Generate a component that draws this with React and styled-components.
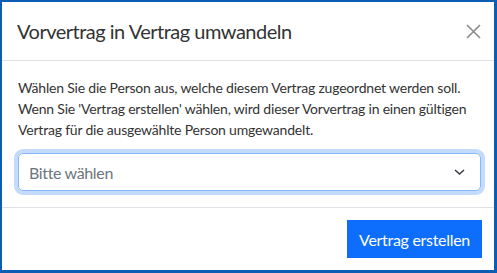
import React from "react"
import styled, { createGlobalStyle } from "styled-components"

const GlobalStyle = createGlobalStyle`
  html, body {
    margin: 0;
    padding: 0;
    background: #0b5db3;
  }
  body {
    font-family: Lato, "Liberation Sans", sans-serif;
    color: #333;
  }
`

const Frame = styled.div`
  box-sizing: border-box;
  height: 273px;
  padding: 2px 3px 3px 2px;
`

const Dialog = styled.div`
  height: 100%;
  background: #fff;
  display: flex;
  flex-direction: column;
`

const Header = styled.div`
  height: 58px;
  flex-shrink: 0;
  display: flex;
  align-items: center;
  justify-content: space-between;
  padding: 0 13px 0 15px;
  border-bottom: 1px solid #dee2e6;
`

const Title = styled.h5`
  margin: 0;
  font-size: 20px;
  font-weight: 400;
  letter-spacing: -0.5px;
  color: #333;
`

const CloseButton = styled.button`
  border: 0;
  background: none;
  padding: 0;
  width: 16px;
  height: 16px;
  display: flex;
  align-items: center;
  justify-content: center;
  cursor: pointer;
`

const Body = styled.div`
  flex: 1;
  padding: 16px 13px 15px 16px;
  display: flex;
  flex-direction: column;
`

const Text = styled.p`
  margin: 0 0 13px;
  font-size: 14px;
  line-height: 21px;
  letter-spacing: -0.2px;
  white-space: nowrap;
  color: #333;
`

const SelectBox = styled.div`
  box-sizing: border-box;
  height: 38px;
  border: 1px solid #86b7fe;
  border-radius: 5px;
  box-shadow: 0 0 0 4px #c3dbfe;
  display: flex;
  align-items: center;
  justify-content: space-between;
  padding: 0 15px 0 10px;
  font-size: 16px;
  letter-spacing: -0.35px;
  color: ${props => (props.$empty ? "#6c757d" : "#333")};
`

const Footer = styled.div`
  height: 62px;
  flex-shrink: 0;
  border-top: 1px solid #dee2e6;
  display: flex;
  align-items: center;
  justify-content: flex-end;
  padding: 0 12px;
`

const PrimaryButton = styled.button`
  height: 38px;
  width: 135px;
  border: 0;
  border-radius: 0;
  background: #0d6efd;
  color: #fff;
  font-family: inherit;
  font-size: 16px;
  letter-spacing: -0.3px;
  cursor: pointer;
`

const App = () => {
  return (
    <>
      <GlobalStyle />
      <Frame>
        <Dialog>
          <Header>
            <Title>Vorvertrag in Vertrag umwandeln</Title>
            <CloseButton aria-label="Schließen">
              <svg width="15" height="15" viewBox="0 0 15 15">
                <path d="M1 1L14 14M14 1L1 14" stroke="#8a8a8a" strokeWidth="1.6" fill="none" />
              </svg>
            </CloseButton>
          </Header>
          <Body>
            <Text>
              Wählen Sie die Person aus, welche diesem Vertrag zugeordnet werden soll.
              <br />
              Wenn Sie 'Vertrag erstellen' wählen, wird dieser Vorvertrag in einen gültigen
              <br />
              Vertrag für die ausgewählte Person umgewandelt.
            </Text>
            <SelectBox $empty>
              <span>Bitte wählen</span>
              <svg width="11" height="6" viewBox="0 0 11 6">
                <path d="M1 1L5.5 5L10 1" stroke="#343a40" strokeWidth="1.5" fill="none" />
              </svg>
            </SelectBox>
          </Body>
          <Footer>
            <PrimaryButton>Vertrag erstellen</PrimaryButton>
          </Footer>
        </Dialog>
      </Frame>
    </>
  )
}

export default App
